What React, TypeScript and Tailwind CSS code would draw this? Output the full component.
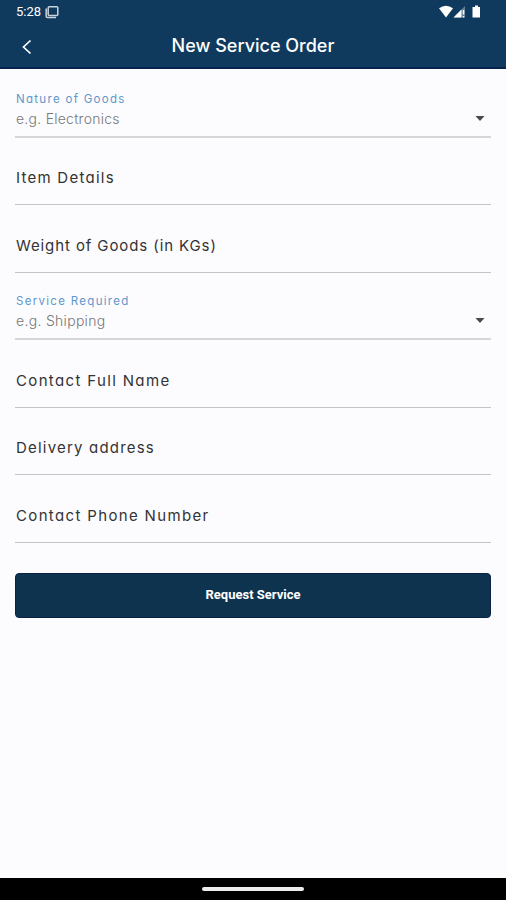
import React from "react";

type Field = {
  label: string;
  labelClass: string;
  hint?: string;
  hintClass?: string;
};

const fields: Field[] = [
  {
    label: "Nature of Goods",
    labelClass: "tracking-[1.3px]",
    hint: "e.g. Electronics",
    hintClass: "tracking-[0.25px]",
  },
  { label: "Item Details", labelClass: "tracking-[1.25px]" },
  { label: "Weight of Goods (in KGs)", labelClass: "tracking-[0.9px]" },
  {
    label: "Service Required",
    labelClass: "tracking-[1.3px]",
    hint: "e.g. Shipping",
    hintClass: "tracking-[0.3px]",
  },
  { label: "Contact Full Name", labelClass: "tracking-[1.35px]" },
  { label: "Delivery address", labelClass: "tracking-[1.2px]" },
  { label: "Contact Phone Number", labelClass: "tracking-[1.35px]" },
];

function StatusBar() {
  return (
    <div className="flex h-6 items-center justify-between pl-4 pr-6 text-white">
      <div className="flex items-center gap-1">
        <span className="font-[Roboto,sans-serif] text-[13px] leading-6">
          5:28
        </span>
        <svg className="h-3.5 w-3.5" viewBox="0 0 14 14" fill="none" aria-hidden>
          <rect x="3.2" y="1.7" width="9.6" height="8.8" rx="1" stroke="#c9d3dc" strokeWidth="1.5" />
          <path d="M1.2 3.5V11.2Q1.2 12.5 2.5 12.5H11" stroke="#c9d3dc" strokeWidth="1.5" />
        </svg>
      </div>
      <svg className="h-4 w-[43px]" viewBox="0 0 43 16" aria-hidden>
        <path d="M0 4.2Q7 -0.8 14 4.2L7 13.5Z" fill="#fff" />
        <path d="M14.5 13.5L26 2V13.5Z" fill="#fff" fillOpacity="0.35" />
        <path d="M14.5 13.5L22.5 5.5V13.5Z" fill="#fff" />
        <path d="M24.5 6V10.5M24.5 12V13.5" stroke="#fff" strokeWidth="1.5" />
        <path d="M36 1.5H39V3H41V13.5H33.5V3H36Z" fill="#fff" />
      </svg>
    </div>
  );
}

function FormField({ label, labelClass, hint, hintClass }: Field) {
  if (hint) {
    return (
      <div className="flex h-[67.5px] items-end justify-between border-b-2 border-[#d6d6d9] pb-[7px] pl-px">
        <div>
          <div className={`text-[11.5px] leading-5 text-[#5f97cb] ${labelClass}`}>
            {label}
          </div>
          <div className={`text-[14px] leading-5 font-light text-[#777] ${hintClass}`}>
            {hint}
          </div>
        </div>
        <svg className="mr-[6px] mb-[8px] h-[5px] w-[10px]" viewBox="0 0 10 5" aria-hidden>
          <path d="M0.5 0H9.5L5 5Z" fill="#4a4a4c" />
        </svg>
      </div>
    );
  }

  return (
    <div className="flex h-[67.5px] items-end border-b border-[#c4c4c7] pb-[14px] pl-px">
      <div className={`text-[15px] leading-6 text-[#333335] ${labelClass}`}>
        {label}
      </div>
    </div>
  );
}

export default function App(): React.JSX.Element {
  return (
    <div className="flex h-[900px] w-[506px] flex-col bg-[#fcfcfe] font-[Inter,sans-serif] [font-feature-settings:'cv11']">
      <header className="h-[69px] border-b-2 border-[#072450] bg-[#0f3a5d]">
        <StatusBar />
        <div className="grid h-[43px] grid-cols-[54px_1fr_54px] items-center text-white">
          <svg className="ml-[21px] mt-0.5 h-4 w-3" viewBox="0 0 12 16" fill="none" aria-hidden>
            <path d="M9.5 1.5L2.5 8L9.5 14.5" stroke="#fff" strokeWidth="1.7" />
          </svg>
          <h1 className="text-center text-[18px] font-medium">
            New Service Order
          </h1>
        </div>
      </header>

      <main className="flex-1 px-[15px] pt-px">
        {fields.map((field) => (
          <FormField key={field.label} {...field} />
        ))}
        <button className="mt-[30px] block h-[45px] w-full rounded-[4px] border border-[#0a2248] bg-[#0e334f] font-[Roboto,sans-serif] text-[13px] font-bold text-white">
          Request Service
        </button>
      </main>

      <footer className="flex h-[22px] items-center justify-center bg-black">
        <div className="h-1 w-[102px] rounded-full bg-[#ededed]" />
      </footer>
    </div>
  );
}
